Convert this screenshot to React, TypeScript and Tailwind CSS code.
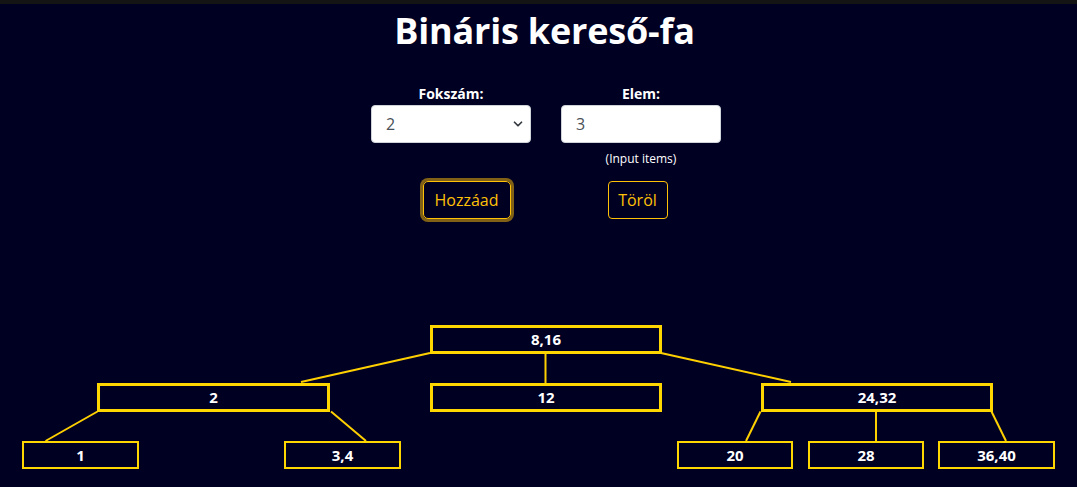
import { ChevronDown } from 'lucide-react';

type Node = { label: string; left: number; top: number; w: number; h: number; b: number };

// tree nodes, page coordinates shifted into the tree canvas (canvas top = 320)
const nodes: Node[] = [
  { label: '8,16', left: 430, top: 5, w: 232, h: 29, b: 3 },
  { label: '2', left: 97, top: 63, w: 233, h: 29, b: 3 },
  { label: '12', left: 430, top: 63, w: 232, h: 29, b: 3 },
  { label: '24,32', left: 761, top: 63, w: 232, h: 29, b: 3 },
  { label: '1', left: 22, top: 121, w: 117, h: 28, b: 2 },
  { label: '3,4', left: 284, top: 121, w: 117, h: 28, b: 2 },
  { label: '20', left: 677, top: 121, w: 116, h: 28, b: 2 },
  { label: '28', left: 808, top: 121, w: 116, h: 28, b: 2 },
  { label: '36,40', left: 938, top: 121, w: 117, h: 28, b: 2 },
];

const edges: [number, number, number, number][] = [
  [430, 33, 301, 62],
  [545.5, 34, 545.5, 63],
  [661, 33, 791, 62],
  [97.5, 91.5, 45.5, 121],
  [331, 91.5, 366, 121],
  [760.5, 91.5, 746, 121],
  [876, 92, 876, 121],
  [991.5, 91.5, 1006, 121],
];

export default function App() {
  return (
    <div className="min-h-screen bg-[#000023] text-white font-['Open_Sans','Noto_Sans',sans-serif]">
      <div className="h-[4px] bg-[#141414]" />

      <h1 className="text-center text-[36px] font-bold leading-[50px] mt-[2px] pl-[12px] tracking-[-0.2px]">
        Bináris kereső-fa
      </h1>

      {/* form */}
      <div className="flex justify-center gap-[30px] mt-[28px] ml-[15px]">
        <div className="w-[160px] flex flex-col items-center">
          <label className="text-[14px] font-bold leading-[20px]">Fokszám:</label>
          <div className="relative w-full mt-[1px]">
            <select
              defaultValue="2"
              className="w-full h-[38px] appearance-none rounded-[4px] border border-[#ced4da] bg-white pl-[14px] text-[16px] text-[#495057] outline-none"
            >
              <option value="2">2</option>
              <option value="3">3</option>
              <option value="4">4</option>
            </select>
            <ChevronDown size={14} strokeWidth={3} className="absolute right-[6px] top-[12px] text-[#343a40] pointer-events-none" />
          </div>
        </div>
        <div className="w-[160px] flex flex-col items-center">
          <label className="text-[14px] font-bold leading-[20px]">Elem:</label>
          <input
            defaultValue="3"
            className="w-full h-[38px] mt-[1px] rounded-[4px] border border-[#ced4da] bg-white pl-[14px] text-[16px] text-[#495057] outline-none"
          />
          <span className="text-[12px] leading-[16px] mt-[8px]">(Input items)</span>
        </div>
      </div>

      {/* buttons */}
      <div className="flex justify-center gap-[97px] mt-[14px] ml-[13px]">
        <button className="h-[38px] w-[88px] rounded-[5px] border border-[#ffc107] text-[#ffc107] text-[16px] shadow-[0_0_0_3px_rgba(255,193,7,0.5)]">
          Hozzáad
        </button>
        <button className="h-[38px] w-[60px] rounded-[4px] border border-[#ffc107] text-[#ffc107] text-[16px]">
          Töröl
        </button>
      </div>

      {/* tree canvas */}
      <div className="relative h-[167px] mt-[101px]">
        <svg className="absolute inset-0" width="1077" height="167">
          {edges.map(([x1, y1, x2, y2], i) => (
            <line key={i} x1={x1} y1={y1} x2={x2} y2={y2} stroke="#ffd000" strokeWidth={2} />
          ))}
        </svg>
        {nodes.map((n, i) => (
          <div
            key={i}
            className="absolute flex items-center justify-center border-[#ffd700] bg-[#000023] text-[15px] font-bold text-white"
            style={{ left: n.left, top: n.top, width: n.w, height: n.h, borderWidth: n.b }}
          >
            {n.label}
          </div>
        ))}
      </div>
    </div>
  );
}
